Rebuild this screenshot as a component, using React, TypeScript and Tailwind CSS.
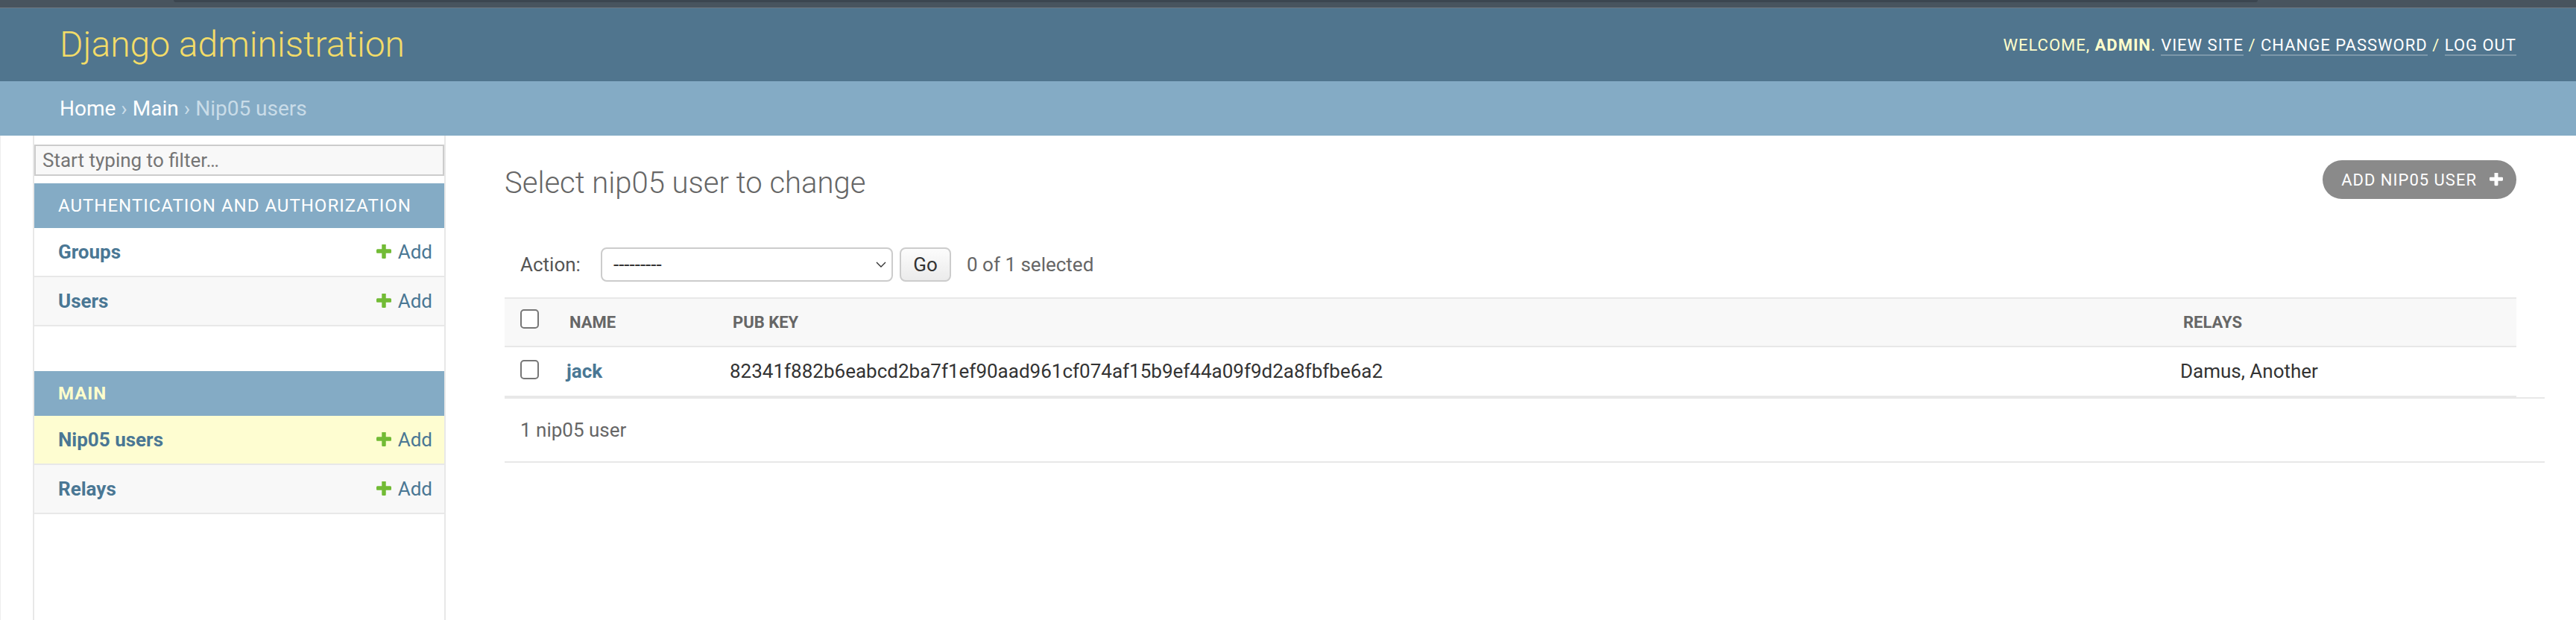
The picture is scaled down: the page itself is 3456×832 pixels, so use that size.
import React from "react";

function PlusIcon({ className }: { className?: string }) {
  return (
    <svg viewBox="192 192 1408 1408" className={className} fill="currentColor" aria-hidden="true">
      <path d="M1600 736v192q0 40-28 68t-68 28h-416v416q0 40-28 68t-68 28h-192q-40 0-68-28t-28-68v-416h-416q-40 0-68-28t-28-68v-192q0-40 28-68t68-28h416v-416q0-40 28-68t68-28h192q40 0 68 28t28 68v416h416q40 0 68 28t28 68z" />
    </svg>
  );
}

function Chevron() {
  return (
    <svg viewBox="0 0 14 8" className="h-[8px] w-[14px]" fill="none" stroke="#333333" strokeWidth="1.4" aria-hidden="true">
      <path d="M1 1l6 6 6-6" />
    </svg>
  );
}

function Checkbox() {
  return <div className="h-[26px] w-[25px] rounded-[5px] border-2 border-[#767676] bg-white" />;
}

function SideRow({ label, bg }: { label: string; bg: string }) {
  return (
    <div className={`flex h-[66px] items-center justify-between border-b-2 border-[#e8e8e8] pl-[32px] pr-[16px] ${bg}`}>
      <span className="text-[26px] font-bold text-[#4a7794]">{label}</span>
      <span className="flex items-center text-[26px] text-[#4a7794]">
        <PlusIcon className="h-[20px] w-[20px] text-[#72bb35]" />
        <span className="ml-[9px]">Add</span>
      </span>
    </div>
  );
}

function Caption({ children, current }: { children: React.ReactNode; current?: boolean }) {
  return (
    <div
      className={`flex h-[60px] items-center bg-[#84abc5] pl-[32px] text-[24px] uppercase tracking-[1px] ${
        current ? "font-bold text-[#ffffcc]" : "text-white"
      }`}
    >
      {children}
    </div>
  );
}

export default function App() {
  return (
    <div className="relative flex h-[832px] w-[3456px] flex-col overflow-hidden bg-white [font-family:Roboto,'Liberation_Sans',sans-serif]">
      {/* browser chrome strip */}
      <div className="h-[11px] shrink-0 border-b border-[#6e7982] bg-[#48545e]" />
      <div className="absolute left-[233px] top-0 h-[3px] w-[2796px] rounded-b-[6px] bg-[#3b4650]" />

      {/* header */}
      <header className="flex h-[98px] shrink-0 items-center justify-between bg-[#50758e] px-[80px]">
        <div className="text-[48px] font-light leading-none text-[#f3dc68]">Django administration</div>
        <div className="text-[22px] uppercase tracking-[1px] text-[#ffffcc]">
          Welcome, <strong className="font-bold">admin</strong>.{" "}
          <a className="border-b-2 border-white/25 text-white">View site</a> /{" "}
          <a className="border-b-2 border-white/25 text-white">Change password</a> /{" "}
          <a className="border-b-2 border-white/25 text-white">Log out</a>
        </div>
      </header>

      {/* breadcrumbs */}
      <div className="flex h-[73px] shrink-0 items-center bg-[#84abc5] pl-[80px] text-[28px] text-[#c9dce8]">
        <a className="text-white">Home</a>
        <span className="mx-[7px]">›</span>
        <a className="text-white">Main</a>
        <span className="mx-[7px]">›</span>
        <span>Nip05 users</span>
      </div>

      {/* body */}
      <div className="flex min-h-0 flex-1">
        <div className="w-[46px] shrink-0 border-l border-r-2 border-l-[#eeeeee] border-r-[#e8e8e8]" />

        <nav className="w-[552px] shrink-0 border-r-2 border-[#e8e8e8] pt-[12px]">
          <div className="flex h-[42px] items-center border-2 border-[#cccccc] bg-[#f8f8f8] pl-[9px] text-[26px] text-[#757575]">
            Start typing to filter…
          </div>
          <div className="mt-[10px]">
            <Caption>Authentication and Authorization</Caption>
            <SideRow label="Groups" bg="bg-white" />
            <SideRow label="Users" bg="bg-[#f8f8f8]" />
          </div>
          <div className="mt-[60px]">
            <Caption current>Main</Caption>
            <SideRow label="Nip05 users" bg="bg-[#fefdd1]" />
            <SideRow label="Relays" bg="bg-[#f8f8f8]" />
          </div>
        </nav>

        <main className="min-w-0 flex-1 pl-[79px] pr-[42px] pt-[40px]">
          <div className="mr-[38px] flex items-start justify-between">
            <h1 className="text-[40px] font-light leading-[47px] text-[#666666]">Select nip05 user to change</h1>
            <a className="mt-[-7px] flex h-[52px] items-center rounded-full bg-[#8a8a8a] pl-[25px] pr-[18px] text-[22px] uppercase tracking-[1px] text-white">
              Add nip05 user
              <PlusIcon className="ml-[17px] h-[18px] w-[18px] text-white" />
            </a>
          </div>

          {/* actions */}
          <div className="mt-[63px] flex h-[46px] items-center pl-[21px]">
            <span className="w-[108px] text-[26px] text-[#555555]">Action:</span>
            <div className="flex h-[46px] w-[392px] items-center justify-between rounded-[8px] border-2 border-[#cccccc] bg-white pl-[15px] pr-[7px] text-[26px] text-[#333333]">
              <span>---------</span>
              <Chevron />
            </div>
            <div className="ml-[9px] flex h-[46px] w-[69px] items-center justify-center rounded-[8px] border-2 border-[#cccccc] bg-gradient-to-b from-[#fcfcfc] to-[#ebebeb] text-[26px] text-[#333333]">
              Go
            </div>
            <span className="ml-[21px] text-[26px] text-[#666666]">0 of 1 selected</span>
          </div>

          {/* results table */}
          <div className="mr-[38px] mt-[21px]">
            <div className="grid h-[67px] grid-cols-[67px_219px_1946px_1fr] border-y-2 border-[#e8e8e8] bg-[#f8f8f8] text-[22px] font-bold uppercase text-[#666666]">
              <div className="pl-[21px] pt-[14px]">
                <Checkbox />
              </div>
              <div className="flex items-center px-[20px]">Name</div>
              <div className="flex items-center px-[20px]">Pub key</div>
              <div className="flex items-center px-[20px]">Relays</div>
            </div>
            <div className="grid h-[67px] grid-cols-[67px_219px_1946px_1fr] border-b-2 border-[#e8e8e8] bg-white text-[26px] text-[#333333]">
              <div className="pl-[21px] pt-[17px]">
                <Checkbox />
              </div>
              <div className="flex items-center px-[16px] font-bold text-[#4a7794]">jack</div>
              <div className="flex items-center px-[16px]">82341f882b6eabcd2ba7f1ef90aad961cf074af15b9ef44a09f9d2a8fbfbe6a2</div>
              <div className="flex items-center px-[16px]">Damus, Another</div>
            </div>
          </div>

          {/* paginator */}
          <div className="flex h-[88px] items-center border-y-2 border-[#e8e8e8] pl-[21px] text-[26px] text-[#666666]">
            1 nip05 user
          </div>
        </main>
      </div>
    </div>
  );
}
